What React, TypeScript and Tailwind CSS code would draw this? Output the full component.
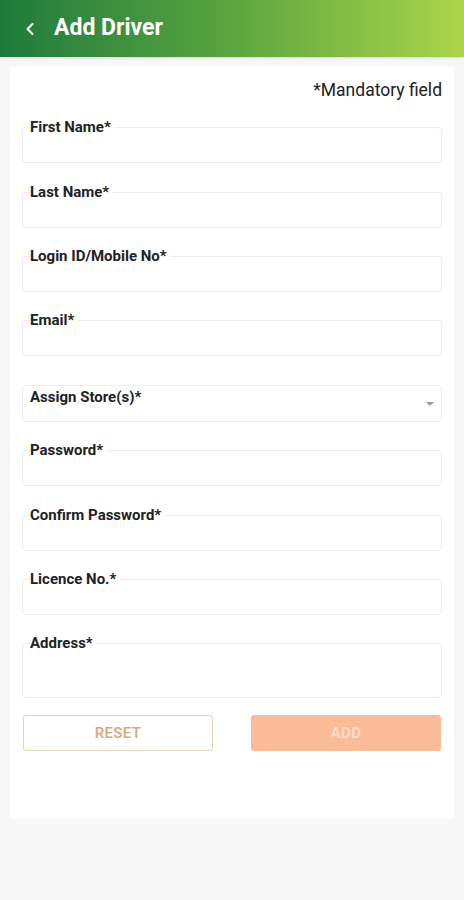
import { ChevronLeft } from 'lucide-react';

const fields = [
  { label: 'First Name*' },
  { label: 'Last Name*' },
  { label: 'Login ID/Mobile No*' },
  { label: 'Email*' },
  { label: 'Assign Store(s)*', select: true },
  { label: 'Password*' },
  { label: 'Confirm Password*' },
  { label: 'Licence No.*' },
  { label: 'Address*', tall: true },
];

function Field({ label, select, tall }: { label: string; select?: boolean; tall?: boolean }) {
  if (select) {
    return (
      <div className="relative h-[37px] rounded border border-[#ececec] bg-white">
        <span className="absolute left-[7px] top-[0px] text-[15px] font-bold text-[#222]">{label}</span>
        <svg className="absolute right-[6px] top-[15px]" width="10" height="6" viewBox="0 0 10 6">
          <path d="M1 1 L5 5 L9 1 Z" fill="#9a9a9a" />
        </svg>
      </div>
    );
  }
  return (
    <div className={`relative rounded border border-[#ececec] bg-white ${tall ? 'h-[55px]' : 'h-[36px]'}`}>
      <span className="absolute -top-[10px] left-[7px] bg-white pr-1 text-[15px] font-bold leading-[18px] text-[#222]">
        {label}
      </span>
    </div>
  );
}

export default function App() {
  return (
    <div className="min-h-[900px] bg-[#f7f7f7] font-['Roboto',sans-serif]">
      <div className="flex h-[57px] items-center bg-gradient-to-r from-[#1b7a3b] via-[#5aa53f] to-[#abd54b] pl-[20px] shadow-sm">
        <ChevronLeft className="h-[20px] w-[20px] text-white" strokeWidth={2.5} />
        <span className="ml-[14px] text-[23px] font-bold text-white">Add Driver</span>
      </div>

      <div className="mx-[10px] mt-[9px] h-[752px] bg-white px-[12px] pt-[11px]">
        <div className="text-right text-[17.5px] text-[#222]">*Mandatory field</div>
        <div className="mt-[24px] flex flex-col gap-[28.4px]">
          {fields.map((f) => (
            <Field key={f.label} label={f.label} select={f.select} tall={f.tall} />
          ))}
        </div>
        <div className="mt-[17px] flex justify-between px-[1px]">
          <button className="h-[36px] w-[190px] rounded-[3px] border border-[#ead4b8] bg-white text-[15px] font-medium tracking-wide text-[#d8a57c]">
            RESET
          </button>
          <button className="h-[36px] w-[190px] rounded-[3px] bg-[#fcbb97] text-[15px] font-medium tracking-wide text-[#fde3d0]">
            ADD
          </button>
        </div>
      </div>
    </div>
  );
}
